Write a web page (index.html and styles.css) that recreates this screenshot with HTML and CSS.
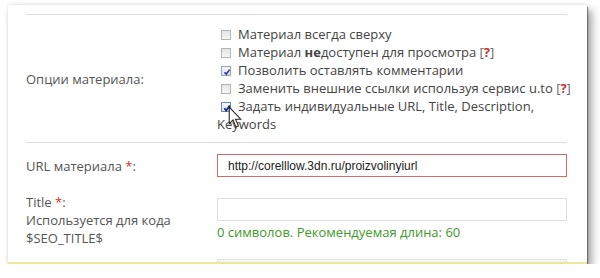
FILE: index.html
```html
<!DOCTYPE html>
<html lang="ru">
<head>
  <meta charset="UTF-8"/>
  <title>Опции материала</title>
  <link rel="stylesheet" href="styles.css">
</head>
<body>
  <div class="frame">
    <div class="sep"></div>

    <div class="row row-opts">
      <div class="lbl">Опции материала:</div>
      <div class="opts">
        <div class="opt"><span class="cb"></span>Материал всегда сверху</div>
        <div class="opt"><span class="cb"></span>Материал <b>не</b>доступен для просмотра <span class="hint">[<i>?</i>]</span></div>
        <div class="opt"><span class="cb on"><svg viewBox="0 0 10 10"><path d="M2.5 5.2 L4.3 7.3 L7.6 2.6" fill="none" stroke="#2b3a9a" stroke-width="1.6"/></svg></span>Позволить оставлять комментарии</div>
        <div class="opt"><span class="cb"></span>Заменить внешние ссылки используя сервис u.to <span class="hint">[<i>?</i>]</span></div>
        <div class="opt last"><span class="cb on hot"><svg viewBox="0 0 10 10"><path d="M2.3 5.2 L4.2 7.6 L7.8 2.4" fill="none" stroke="#1a2a8a" stroke-width="1.8"/></svg></span>Задать индивидуальные URL, Title, Description, Keywords
          <svg class="cursor" viewBox="0 0 14 22" width="15" height="23"><path d="M1 1 L1 17 L4.6 13.4 L7.4 20 L9.8 19 L7 12.6 L12 12.6 Z" fill="#fff" stroke="#222" stroke-width="1"/></svg>
        </div>
      </div>
    </div>

    <div class="sep"></div>

    <div class="row row-url">
      <div class="lbl">URL материала <span class="req">*</span>:</div>
      <div class="field"><input class="inp err" type="text" value="http://corelllow.3dn.ru/proizvolinyiurl"/></div>
    </div>

    <div class="row row-title">
      <div class="lbl">Title <span class="req">*</span>:<br>Используется для кода<br>$SEO_TITLE$</div>
      <div class="field">
        <input class="inp" type="text" value=""/>
        <div class="count">0 символов. Рекомендуемая длина: 60</div>
      </div>
    </div>

    <div class="row">
      <div class="lbl"></div>
      <div class="field"><div class="inp next"></div></div>
    </div>
  </div>
</body>
</html>
```

FILE: styles.css
```css
body { margin:0; background:#fff; font-family:"Open Sans", sans-serif; font-size:13px; color:#444; }
.frame { position:relative; margin:5px 0 0 8px; width:579px; height:259px; box-sizing:border-box; padding:9px 20px 0 18px; background:#fff; overflow:hidden; border-bottom:2px solid #ece79c; box-shadow:0 0 4px rgba(0,0,0,.12), 1px 2px 1px rgba(0,0,0,.35), 5px 5px 8px rgba(0,0,0,.35); }
.sep { height:1px; background:#dcdcdc; }
.row { display:flex; align-items:flex-start; }
.lbl { width:191px; flex:none; color:#555; line-height:18px; }
.req { color:#d03030; }
.row-opts { align-items:center; padding:10px 0 9px; }
.opts { width:350px; line-height:18px; color:#444; }
.opt { white-space:nowrap; }
.opt.last { white-space:normal; position:relative; }
.cb { display:inline-block; position:relative; width:10px; height:10px; margin:0 7px 0 4px; vertical-align:-1px; border:1px solid #b4b4b4; box-sizing:border-box; background:linear-gradient(#e4e4e4, #f6f6f6); }
.cb svg { position:absolute; left:0; top:0; width:10px; height:10px; }
.cb.on { border-color:#9aa4b8; background:linear-gradient(#f4f6fa, #e0e4ec); }
.cb.hot { border-color:#6b88b8; }
.hint { color:#666; }
.hint i { font-style:normal; font-weight:bold; color:#c83030; }
.cursor { position:absolute; left:11px; top:9px; }
.row-url { align-items:center; margin-top:11px; }
.field { width:350px; }
.inp { display:block; width:350px; height:23px; box-sizing:border-box; margin:0; padding:0 10px; border:1px solid #dedede; background:#fff; font:12px "Liberation Sans", Arial, sans-serif; color:#222; outline:none; }
.inp.err { border-color:#cf6a6a; }
.row-title { margin-top:16px; }
.row-title .field { margin-top:5px; }
.count { color:#3f9a2a; line-height:18px; margin-top:2px; }
.row .next { height:30px; margin-top:12px; background:#f4f4f4; border-color:#e4e4e4; }
```
